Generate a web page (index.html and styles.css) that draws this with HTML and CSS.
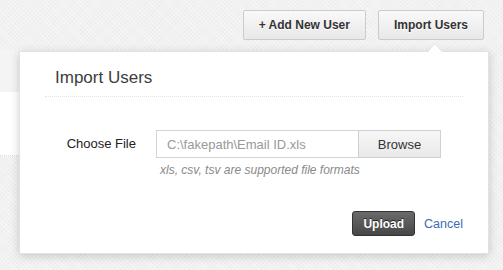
FILE: index.html
```html
<!DOCTYPE html>
<html lang="en">
<head>
  <meta charset="UTF-8">
  <title>Users - Import</title>
  <link rel="stylesheet" href="styles.css">
</head>
<body>
  <div class="toolbar">
    <button class="btn" type="button">+ Add New User</button>
    <button class="btn" type="button">Import Users</button>
  </div>

  <div class="list">
    <div class="list-head"></div>
    <div class="list-row"></div>
  </div>

  <div class="popover">
    <h3 class="popover-title">Import Users</h3>
    <form class="import-form">
      <div class="field">
        <label for="file">Choose File</label>
        <div class="file-box">
          <div class="file-input">
            <input type="text" id="file" value="C:\fakepath\Email ID.xls" readonly>
            <button class="browse" type="button">Browse</button>
          </div>
          <p class="hint">xls, csv, tsv are supported file formats</p>
        </div>
      </div>
      <div class="actions">
        <button class="btn-upload" type="submit">Upload</button>
        <a href="#" class="cancel">Cancel</a>
      </div>
    </form>
  </div>
</body>
</html>
```

FILE: styles.css
```css
body {
  margin: 0;
  padding: 0;
  position: relative;
  height: 270px;
  overflow: hidden;
  font-family: "Liberation Sans", Arial, sans-serif;
  color: #333;
  background-color: #f1f1f1;
  background-image:
    repeating-linear-gradient(45deg, rgba(255,255,255,0.35) 0 1px, transparent 1px 3px),
    repeating-linear-gradient(-45deg, rgba(0,0,0,0.015) 0 1px, transparent 1px 3px);
}

.toolbar {
  height: 50px;
  box-sizing: border-box;
  padding: 10px 19px 0 0;
  display: flex;
  justify-content: flex-end;
  align-items: flex-start;
  gap: 12px;
}

.btn {
  height: 30px;
  padding: 0 15px;
  font-family: inherit;
  font-size: 12px;
  font-weight: bold;
  color: #333;
  text-shadow: 0 1px 0 #fff;
  background: linear-gradient(to bottom, #f9f9f9, #e8e8e8);
  border: 1px solid #cbcbcb;
  border-radius: 2px;
  cursor: pointer;
}

.list {
  margin-right: 14px;
}

.list-head {
  height: 42px;
  background: #f4f4f4;
}

.list-row {
  height: 63px;
  background: #fff;
  border-bottom: 1px dotted #dcdcdc;
}

/* the popover lies over the user list */
.popover {
  position: absolute;
  top: 51px;
  left: 19px;
  width: 470px;
  box-sizing: border-box;
  padding: 0 25px 17px;
  background: #fff;
  border: 1px solid #e2e2e2;
  box-shadow: 0 2px 9px rgba(0,0,0,0.18);
}

.popover::before,
.popover::after {
  content: "";
  position: absolute;
  left: 407px;
  border: 8px solid transparent;
  border-top: 0;
}

.popover::before {
  top: -9px;
  border-bottom: 9px solid #dcdcdc;
}

.popover::after {
  top: -8px;
  border-bottom: 9px solid #fff;
}

.popover-title {
  margin: 0;
  padding: 16px 10px 8px;
  font-size: 17px;
  font-weight: normal;
  line-height: 20px;
  color: #3d3d3d;
  border-bottom: 1px dotted #e4e4e4;
}

.import-form {
  padding-top: 33px;
}

.field {
  display: flex;
  align-items: flex-start;
  gap: 20px;
}

.field label {
  width: 91px;
  text-align: right;
  font-size: 13px;
  line-height: 28px;
  color: #222;
}

.file-input {
  display: flex;
  height: 28px;
}

.file-input input {
  width: 202px;
  box-sizing: border-box;
  margin: 0;
  padding: 0 10px;
  font-family: inherit;
  font-size: 13px;
  color: #999;
  border: 1px solid #d4d4d4;
  border-right: 0;
  outline: none;
}

.browse {
  width: 83px;
  margin: 0;
  font-family: inherit;
  font-size: 13px;
  color: #333;
  background: linear-gradient(to bottom, #f7f7f7, #e9e9e9);
  border: 1px solid #d0d0d0;
  border-radius: 0;
}

.hint {
  margin: 5px 0 0 4px;
  font-size: 12px;
  line-height: 15px;
  font-style: italic;
  color: #8a8a8a;
}

.actions {
  margin-top: 33px;
  display: flex;
  justify-content: flex-end;
  align-items: center;
  gap: 9px;
}

.btn-upload {
  height: 25px;
  padding: 0 10px;
  font-family: inherit;
  font-size: 12px;
  font-weight: bold;
  color: #fff;
  text-shadow: 0 -1px 0 #222;
  background: linear-gradient(to bottom, #6a6a6a, #474747);
  border: 1px solid #333;
  border-radius: 3px;
  cursor: pointer;
}

.cancel {
  font-size: 12.5px;
  color: #3c6db3;
  text-decoration: none;
}
```
